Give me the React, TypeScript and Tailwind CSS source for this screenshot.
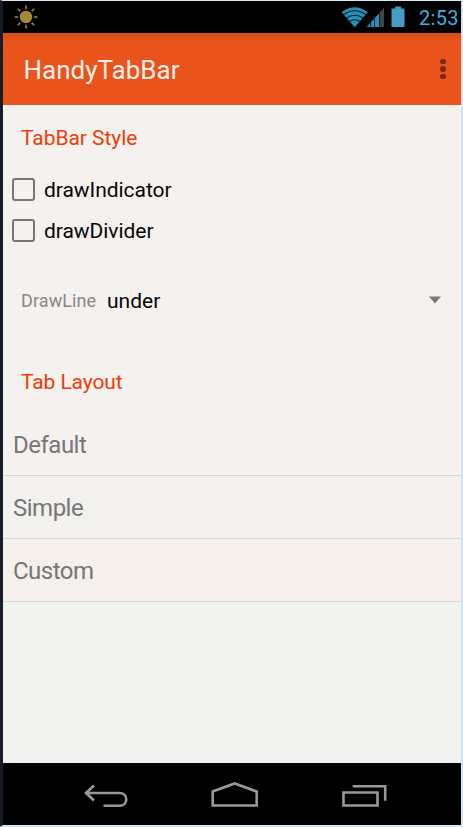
const tabs = [
  { name: 'Default', tone: 'bg-[#f4f1ee]' },
  { name: 'Simple', tone: 'bg-[#f3f1ee]' },
  { name: 'Custom', tone: 'bg-[#f6f0ed]' },
];

function StatusBar() {
  return (
    <div className="flex h-8 shrink-0 items-center bg-black pl-[11px] pr-[2px]">
      <svg width="24" height="24" viewBox="0 0 24 24" fill="none" stroke="#a38a35" strokeWidth="1.6">
        <circle cx="12" cy="12" r="6.2" fill="#a38a35" stroke="none" />
        <path d="M12 .5v3.7M12 19.8v3.7M.5 12h3.7M19.8 12h3.7M3.8 3.8l2.5 2.5M17.7 17.7l2.5 2.5M3.8 20.2l2.5-2.5M17.7 6.3l2.5-2.5" />
      </svg>
      <svg className="ml-auto mr-[12px]" width="66" height="24" viewBox="341 5 66 24" fill="none">
        <path d="M341.7 12.2Q354.7 2.3 367.7 12.2L354.7 27.2Z" fill="#2b8fbb" />
        <path d="M343.3 14.9Q354.7 6.7 366.1 14.9M346 18.2Q354.7 12.2 363.4 18.2M349 21.8Q354.7 17.8 360.4 21.8" stroke="#041a24" strokeWidth="1.1" />
        <path d="M366.5 27 379.5 12.8V27Z" fill="#2b8fbb" />
        <path d="M380 27V12.3L384 7.5V27Z" fill="#444" />
        <path d="M370.5 21v6M374.5 17v10M379.5 12v15" stroke="#062634" strokeWidth="1" />
        <path d="M395 6.5h6v2h3.5V27h-13V8.5h3.5Z" fill="#449dc2" />
      </svg>
      <span className="w-[40px] whitespace-nowrap pt-[2px] text-[20px] leading-[30px] tracking-[0.3px] text-[#35b3e3]">2:53</span>
    </div>
  );
}

function CheckRow({ label }: { label: string }) {
  return (
    <div className="flex h-[41px] items-center pl-[9px]">
      <span className="mr-[9px] size-[23px] rounded-[3px] border-2 border-[#777]" />
      <span className="pt-[2px] text-[21px] tracking-[-0.05px] text-[#050505]">{label}</span>
    </div>
  );
}

export default function App() {
  return (
    <div className="h-[827px] w-[463px] border-b-2 border-l-[3px] border-r-2 border-t border-b-[#d7e4f2] border-l-[#171d28] border-r-[#d5e3f1] border-t-[#d7e9f0] font-['Roboto',sans-serif]">
      <div className="flex h-full flex-col">
        <StatusBar />
        <header className="flex h-[72px] shrink-0 items-center justify-between bg-linear-to-b from-[#d94f19] from-0% via-[#e9531c] via-12% to-[#e9531c] pl-[20.5px] pr-[15.5px]">
          <h1 className="pt-[2px] text-[26px] text-[#fbeee8]">HandyTabBar</h1>
          <div className="flex flex-col gap-[2.5px]">
            <i className="size-[5.3px] rounded-full bg-[#78290c]" />
            <i className="size-[5.3px] rounded-full bg-[#78290c]" />
            <i className="size-[5.3px] rounded-full bg-[#78290c]" />
          </div>
        </header>
        <main className="flex grow flex-col bg-[#f1f2f0]">
          <section className="h-[308px] bg-[#f4f1ee] pt-[17px]">
            <h2 className="h-8 pl-[18px] text-[21px] leading-8 tracking-[-0.05px] text-[#ee3d09]">TabBar Style</h2>
            <div className="mt-[15px]">
              <CheckRow label="drawIndicator" />
              <CheckRow label="drawDivider" />
            </div>
            <div className="mt-[28px] flex h-[42px] items-center pl-[18px] pr-[20px]">
              <span className="w-[86px] text-[18px] tracking-[0.1px] text-[#888]">DrawLine</span>
              <span className="pt-[4px] text-[21px] text-[#050505]">under</span>
              <svg className="ml-auto" width="12" height="8" viewBox="0 0 12 8"><path d="M0 .5h12L6 7.5Z" fill="#777" /></svg>
            </div>
            <h2 className="mt-[45px] h-8 pl-[18px] text-[21px] leading-8 tracking-[-0.1px] text-[#ee3d09]">Tab Layout</h2>
          </section>
          <ul>
            {tabs.map((tab) => (
              <li key={tab.name} className={`${tab.tone} h-[63px] border-b border-[#d0dcdb] pl-[10px] pt-[1px] text-[24px] leading-[62px] tracking-[-0.5px] text-[#777]`}>{tab.name}</li>
            ))}
          </ul>
        </main>
        <nav className="flex h-[62px] shrink-0 bg-black">
          <svg width="458" height="62" viewBox="3 763 458 62" fill="none" stroke="#999" strokeWidth="2.6">
            <path d="m94 785.5-8 7.5 8 7.5M86 793h33.5c9 0 9 12.8 0 12.8H103.5" />
            <path d="M212.7 805.5v-14l22-8 22 8v14Z" />
            <path d="M343.5 792.5h34v13h-34ZM352.7 786.3h32.5v14.5" />
          </svg>
        </nav>
      </div>
    </div>
  );
}
